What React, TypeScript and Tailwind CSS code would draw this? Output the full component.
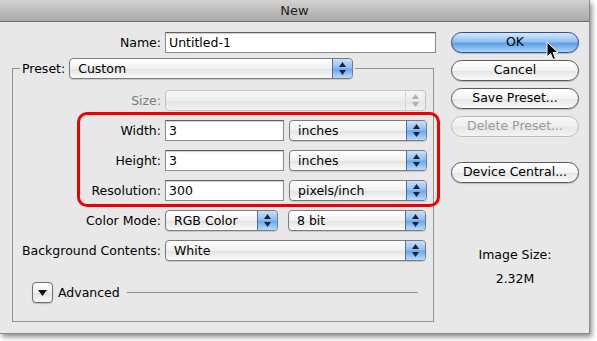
import React from 'react';

const font = { fontFamily: '"DejaVu Sans", "Liberation Sans", sans-serif' };

const Arrows = ({ disabled }: { disabled?: boolean }) => (
    <div
        className={
            disabled
                ? 'w-[20px] h-full flex flex-col items-center justify-center gap-[3px] border-l border-[#d4d4d4]'
                : 'w-[20px] h-full flex flex-col items-center justify-center gap-[3px] border-l border-[#4b6fa8] rounded-r-[4px] bg-[linear-gradient(#c9dff8,#8fbcef_48%,#6aa6ea_52%,#b5dafb)]'
        }
    >
        <svg width="7" height="5" viewBox="0 0 7 5">
            <path d="M3.5 0 L7 5 L0 5 Z" fill={disabled ? '#b0b0b0' : '#15233f'} />
        </svg>
        <svg width="7" height="5" viewBox="0 0 7 5">
            <path d="M0 0 L7 0 L3.5 5 Z" fill={disabled ? '#b0b0b0' : '#15233f'} />
        </svg>
    </div>
);

const Select = ({ value, width, disabled }: { value: string; width: string; disabled?: boolean }) => (
    <div
        className={`${width} h-[21px] flex items-center rounded-[4px] border ${
            disabled
                ? 'border-[#c4c4c4] bg-[linear-gradient(#f6f6f6,#ececec_50%,#e4e4e4_51%,#f2f2f2)]'
                : 'border-[#7b7b7b] bg-[linear-gradient(#ffffff,#f0f0f0_50%,#e2e2e2_51%,#fbfbfb)] shadow-[0_1px_1px_rgba(0,0,0,0.15)]'
        }`}
    >
        <span className="flex-1 pl-[8px] text-[12.5px] text-black leading-[15px] whitespace-nowrap">{value}</span>
        <Arrows disabled={disabled} />
    </div>
);

const Input = ({ value, width }: { value: string; width: string }) => (
    <div className={`${width} h-[21px] flex items-center bg-white border border-[#8c8c8c] border-t-[#5f5f5f] shadow-[inset_0_1px_1px_rgba(0,0,0,0.2)]`}>
        <span className="pl-[3px] text-[12.5px] text-black leading-[15px]">{value}</span>
    </div>
);

const Label = ({ text, width, dim }: { text: string; width: string; dim?: boolean }) => (
    <div className={`${width} shrink-0 text-right pr-[4px] text-[12.5px] leading-[15px] ${dim ? 'text-[#7a7a7a]' : 'text-black'}`}>
        {text}
    </div>
);

const Button = ({ text, kind }: { text: string; kind?: 'default' | 'disabled' }) => {
    if (kind === 'default') {
        return (
            <div className="w-[128px] h-[21px] rounded-full border border-[#2f4f86] flex items-center justify-center text-[12.5px] text-black bg-[linear-gradient(#d8eafc,#8fc0f1_45%,#5f9fe6_55%,#a7d4fa)] shadow-[0_1px_1px_rgba(0,0,0,0.2)]">
                {text}
            </div>
        );
    }
    if (kind === 'disabled') {
        return (
            <div className="w-[128px] h-[21px] rounded-full border border-[#bcbcbc] flex items-center justify-center text-[12.5px] text-[#999] bg-[linear-gradient(#f8f8f8,#eeeeee_50%,#e6e6e6_51%,#f3f3f3)]">
                {text}
            </div>
        );
    }
    return (
        <div className="w-[128px] h-[21px] rounded-full border border-[#5a5a5a] flex items-center justify-center text-[12.5px] text-black bg-[linear-gradient(#ffffff,#f3f3f3_50%,#e4e4e4_51%,#fbfbfb)] shadow-[0_1px_1px_rgba(0,0,0,0.2)]">
            {text}
        </div>
    );
};

export default function App() {
    return (
        <div className="w-[597px] h-[341px] bg-white" style={font}>
            <div className="relative w-[590px] h-[334px] bg-[#e8e8e8] border-r border-b border-[#8a8a8a] shadow-[2px_3px_5px_rgba(0,0,0,0.45)] flex flex-col">
                {/* title bar */}
                <div className="h-[22px] shrink-0 flex items-center justify-center border-b border-[#6e6e6e] bg-[linear-gradient(#d3d3d3,#a8a8a8)] text-[13px] text-[#1e1e1e]">
                    New
                </div>

                <div className="flex flex-1">
                    {/* left column */}
                    <div className="w-[451px] shrink-0 pt-[10px]">
                        <div className="flex items-center">
                            <Label text="Name:" width="w-[165px]" />
                            <Input value="Untitled-1" width="w-[271px]" />
                        </div>

                        <fieldset className="ml-[12px] mt-[5px] w-[422px] h-[264px] border border-[#929292] pl-[7px] pt-[11px] pr-0">
                            <legend className="flex items-center pl-[2px] pr-[2px]">
                                <span className="text-[12.5px] text-black leading-[15px] pr-[4px]">Preset:</span>
                                <Select value="Custom" width="w-[284px]" />
                            </legend>

                            <div className="flex items-center">
                                <Label text="Size:" width="w-[145px]" dim />
                                <Select value="" width="w-[261px]" disabled />
                            </div>

                            <div className="mt-[1px] ml-[57px] mr-[-7px] border-[3px] border-[#ee0000] rounded-[10px] pt-[5px] pb-[3px] flex flex-col gap-[9px]">
                                {[
                                    ['Width:', '3', 'inches'],
                                    ['Height:', '3', 'inches'],
                                    ['Resolution:', '300', 'pixels/inch'],
                                ].map(([l, v, u]) => (
                                    <div key={l} className="flex items-center">
                                        <Label text={l} width="w-[85px]" />
                                        <Input value={v} width="w-[119px]" />
                                        <div className="w-[5px]" />
                                        <Select value={u} width="w-[138px]" />
                                    </div>
                                ))}
                            </div>

                            <div className="mt-[3px] flex items-center">
                                <Label text="Color Mode:" width="w-[145px]" />
                                <Select value="RGB Color" width="w-[113px]" />
                                <div className="w-[10px]" />
                                <Select value="8 bit" width="w-[138px]" />
                            </div>

                            <div className="mt-[9px] flex items-center">
                                <Label text="Background Contents:" width="w-[145px]" />
                                <Select value="White" width="w-[261px]" />
                            </div>

                            <div className="mt-[21px] pl-[12px] flex items-center">
                                <div className="w-[21px] h-[21px] rounded-[4px] border border-[#6f6f6f] flex items-center justify-center bg-[linear-gradient(#ffffff,#efefef_50%,#e0e0e0_51%,#f8f8f8)] shadow-[0_1px_1px_rgba(0,0,0,0.2)]">
                                    <svg width="9" height="6" viewBox="0 0 9 6">
                                        <path d="M0 0 L9 0 L4.5 6 Z" fill="#111" />
                                    </svg>
                                </div>
                                <span className="ml-[5px] text-[12.5px] text-black leading-[15px]">Advanced</span>
                                <div className="ml-[7px] w-[291px] h-px bg-[#8e8e8e]" />
                            </div>
                        </fieldset>
                    </div>

                    {/* right column */}
                    <div className="w-[128px] pt-[10px] flex flex-col">
                        <Button text="OK" kind="default" />
                        <div className="h-[7px]" />
                        <Button text="Cancel" />
                        <div className="h-[7px]" />
                        <Button text="Save Preset..." />
                        <div className="h-[7px]" />
                        <Button text="Delete Preset..." kind="disabled" />
                        <div className="h-[25px]" />
                        <Button text="Device Central..." />
                        <div className="mt-[64px] flex flex-col items-center gap-[9px] text-[12.5px] text-black leading-[15px]">
                            <span>Image Size:</span>
                            <span>2.32M</span>
                        </div>
                    </div>
                </div>

                {/* mouse pointer */}
                <svg className="absolute left-[546px] top-[41px]" width="13" height="20" viewBox="0 0 13 20">
                    <path d="M1 1 L1 16 L4.5 12.5 L7 18.5 L9.5 17.5 L7 11.5 L12 11.5 Z" fill="#000" stroke="#fff" strokeWidth="1" strokeLinejoin="round" />
                </svg>
            </div>
        </div>
    );
}
